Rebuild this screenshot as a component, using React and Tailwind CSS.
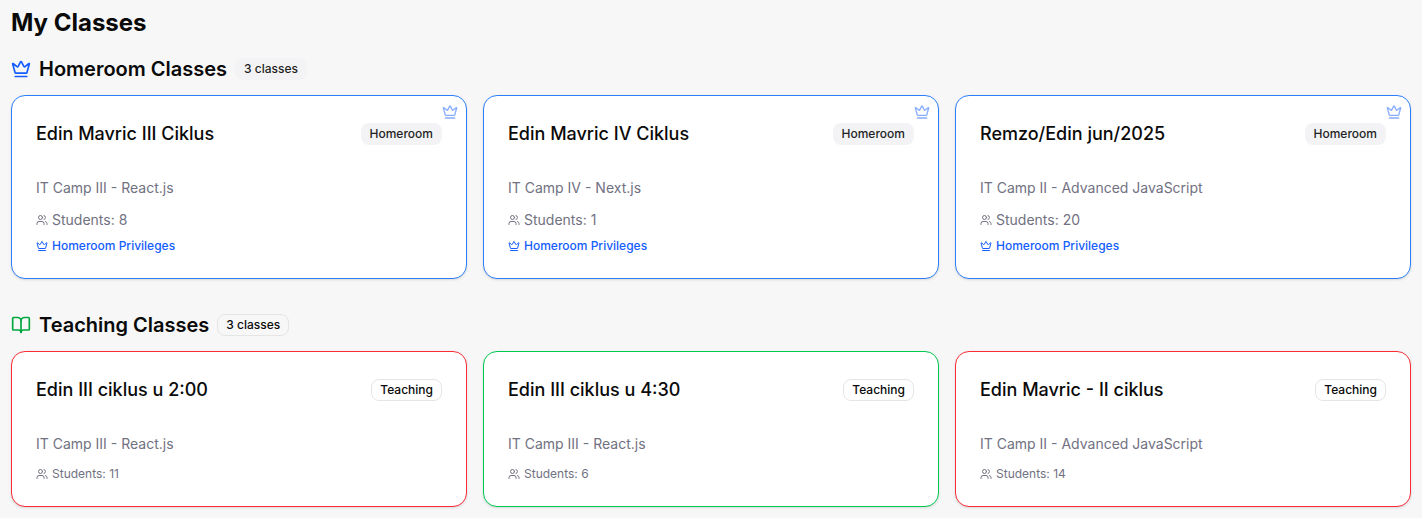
import { BookOpen, Crown, Users } from "lucide-react";

const homeroom = [
  { name: "Edin Mavric III Ciklus", course: "IT Camp III - React.js", students: 8 },
  { name: "Edin Mavric IV Ciklus", course: "IT Camp IV - Next.js", students: 1 },
  { name: "Remzo/Edin jun/2025", course: "IT Camp II - Advanced JavaScript", students: 20 },
];

const teaching = [
  { name: "Edin III ciklus u 2:00", course: "IT Camp III - React.js", students: 11, border: "border-[#fb2c36]" },
  { name: "Edin III ciklus u 4:30", course: "IT Camp III - React.js", students: 6, border: "border-[#00c950]" },
  { name: "Edin Mavric - II ciklus", course: "IT Camp II - Advanced JavaScript", students: 14, border: "border-[#fb2c36]" },
];

function Badge({ outline, children }) {
  return (
    <span
      className={`rounded-lg border px-2 py-0.5 text-xs font-medium ${
        outline
          ? "border-[#e5e5e5] text-[#0a0a0a]"
          : "border-transparent bg-[#f3f3f5] text-[#1f1f24]"
      }`}
    >
      {children}
    </span>
  );
}

function HomeroomCard({ item }) {
  return (
    <div className="relative h-[184px] rounded-[14px] border border-[#2b7fff] bg-white px-6 pt-6 shadow-sm">
      <Crown className="absolute right-2 top-2 h-4 w-4 text-[#155dfc] opacity-50" />
      <div className="flex items-center justify-between">
        <h3 className="text-lg font-medium text-[#0a0a0a]">{item.name}</h3>
        <Badge>Homeroom</Badge>
      </div>
      <p className="mt-[30px] text-sm leading-5 text-[#717182]">{item.course}</p>
      <div className="mt-3 flex items-center gap-1 text-sm leading-5 text-[#717182]">
        <Users className="h-3 w-3" />
        Students: {item.students}
      </div>
      <div className="mt-2 flex items-center gap-1 text-xs font-medium leading-4 text-[#155dfc]">
        <Crown className="h-3 w-3" />
        Homeroom Privileges
      </div>
    </div>
  );
}

function TeachingCard({ item }) {
  return (
    <div className={`h-[156px] rounded-[14px] border bg-white px-6 pt-6 shadow-sm ${item.border}`}>
      <div className="flex items-center justify-between">
        <h3 className="text-lg font-medium text-[#0a0a0a]">{item.name}</h3>
        <Badge outline>Teaching</Badge>
      </div>
      <p className="mt-[30px] text-sm leading-5 text-[#717182]">{item.course}</p>
      <div className="mt-3 flex items-center gap-1 text-xs leading-4 text-[#717182]">
        <Users className="h-3 w-3" />
        Students: {item.students}
      </div>
    </div>
  );
}

export default function App() {
  return (
    <div className="h-[518px] overflow-hidden bg-[#f7f7f7] px-[11px] pt-[7px] font-['Inter',sans-serif]">
      <h1 className="text-2xl font-bold text-[#0a0a0a]">My Classes</h1>

      <div className="mt-4 flex items-center gap-2">
        <Crown className="h-5 w-5 text-[#155dfc]" />
        <h2 className="text-xl font-semibold text-[#0a0a0a]">Homeroom Classes</h2>
        <Badge>3 classes</Badge>
      </div>
      <div className="mt-3 grid grid-cols-3 gap-4">
        {homeroom.map((item) => (
          <HomeroomCard key={item.name} item={item} />
        ))}
      </div>

      <div className="mt-8 flex items-center gap-2">
        <BookOpen className="h-5 w-5 text-[#00a63e]" />
        <h2 className="text-xl font-semibold text-[#0a0a0a]">Teaching Classes</h2>
        <Badge outline>3 classes</Badge>
      </div>
      <div className="mt-3 grid grid-cols-3 gap-4">
        {teaching.map((item) => (
          <TeachingCard key={item.name} item={item} />
        ))}
      </div>
    </div>
  );
}
